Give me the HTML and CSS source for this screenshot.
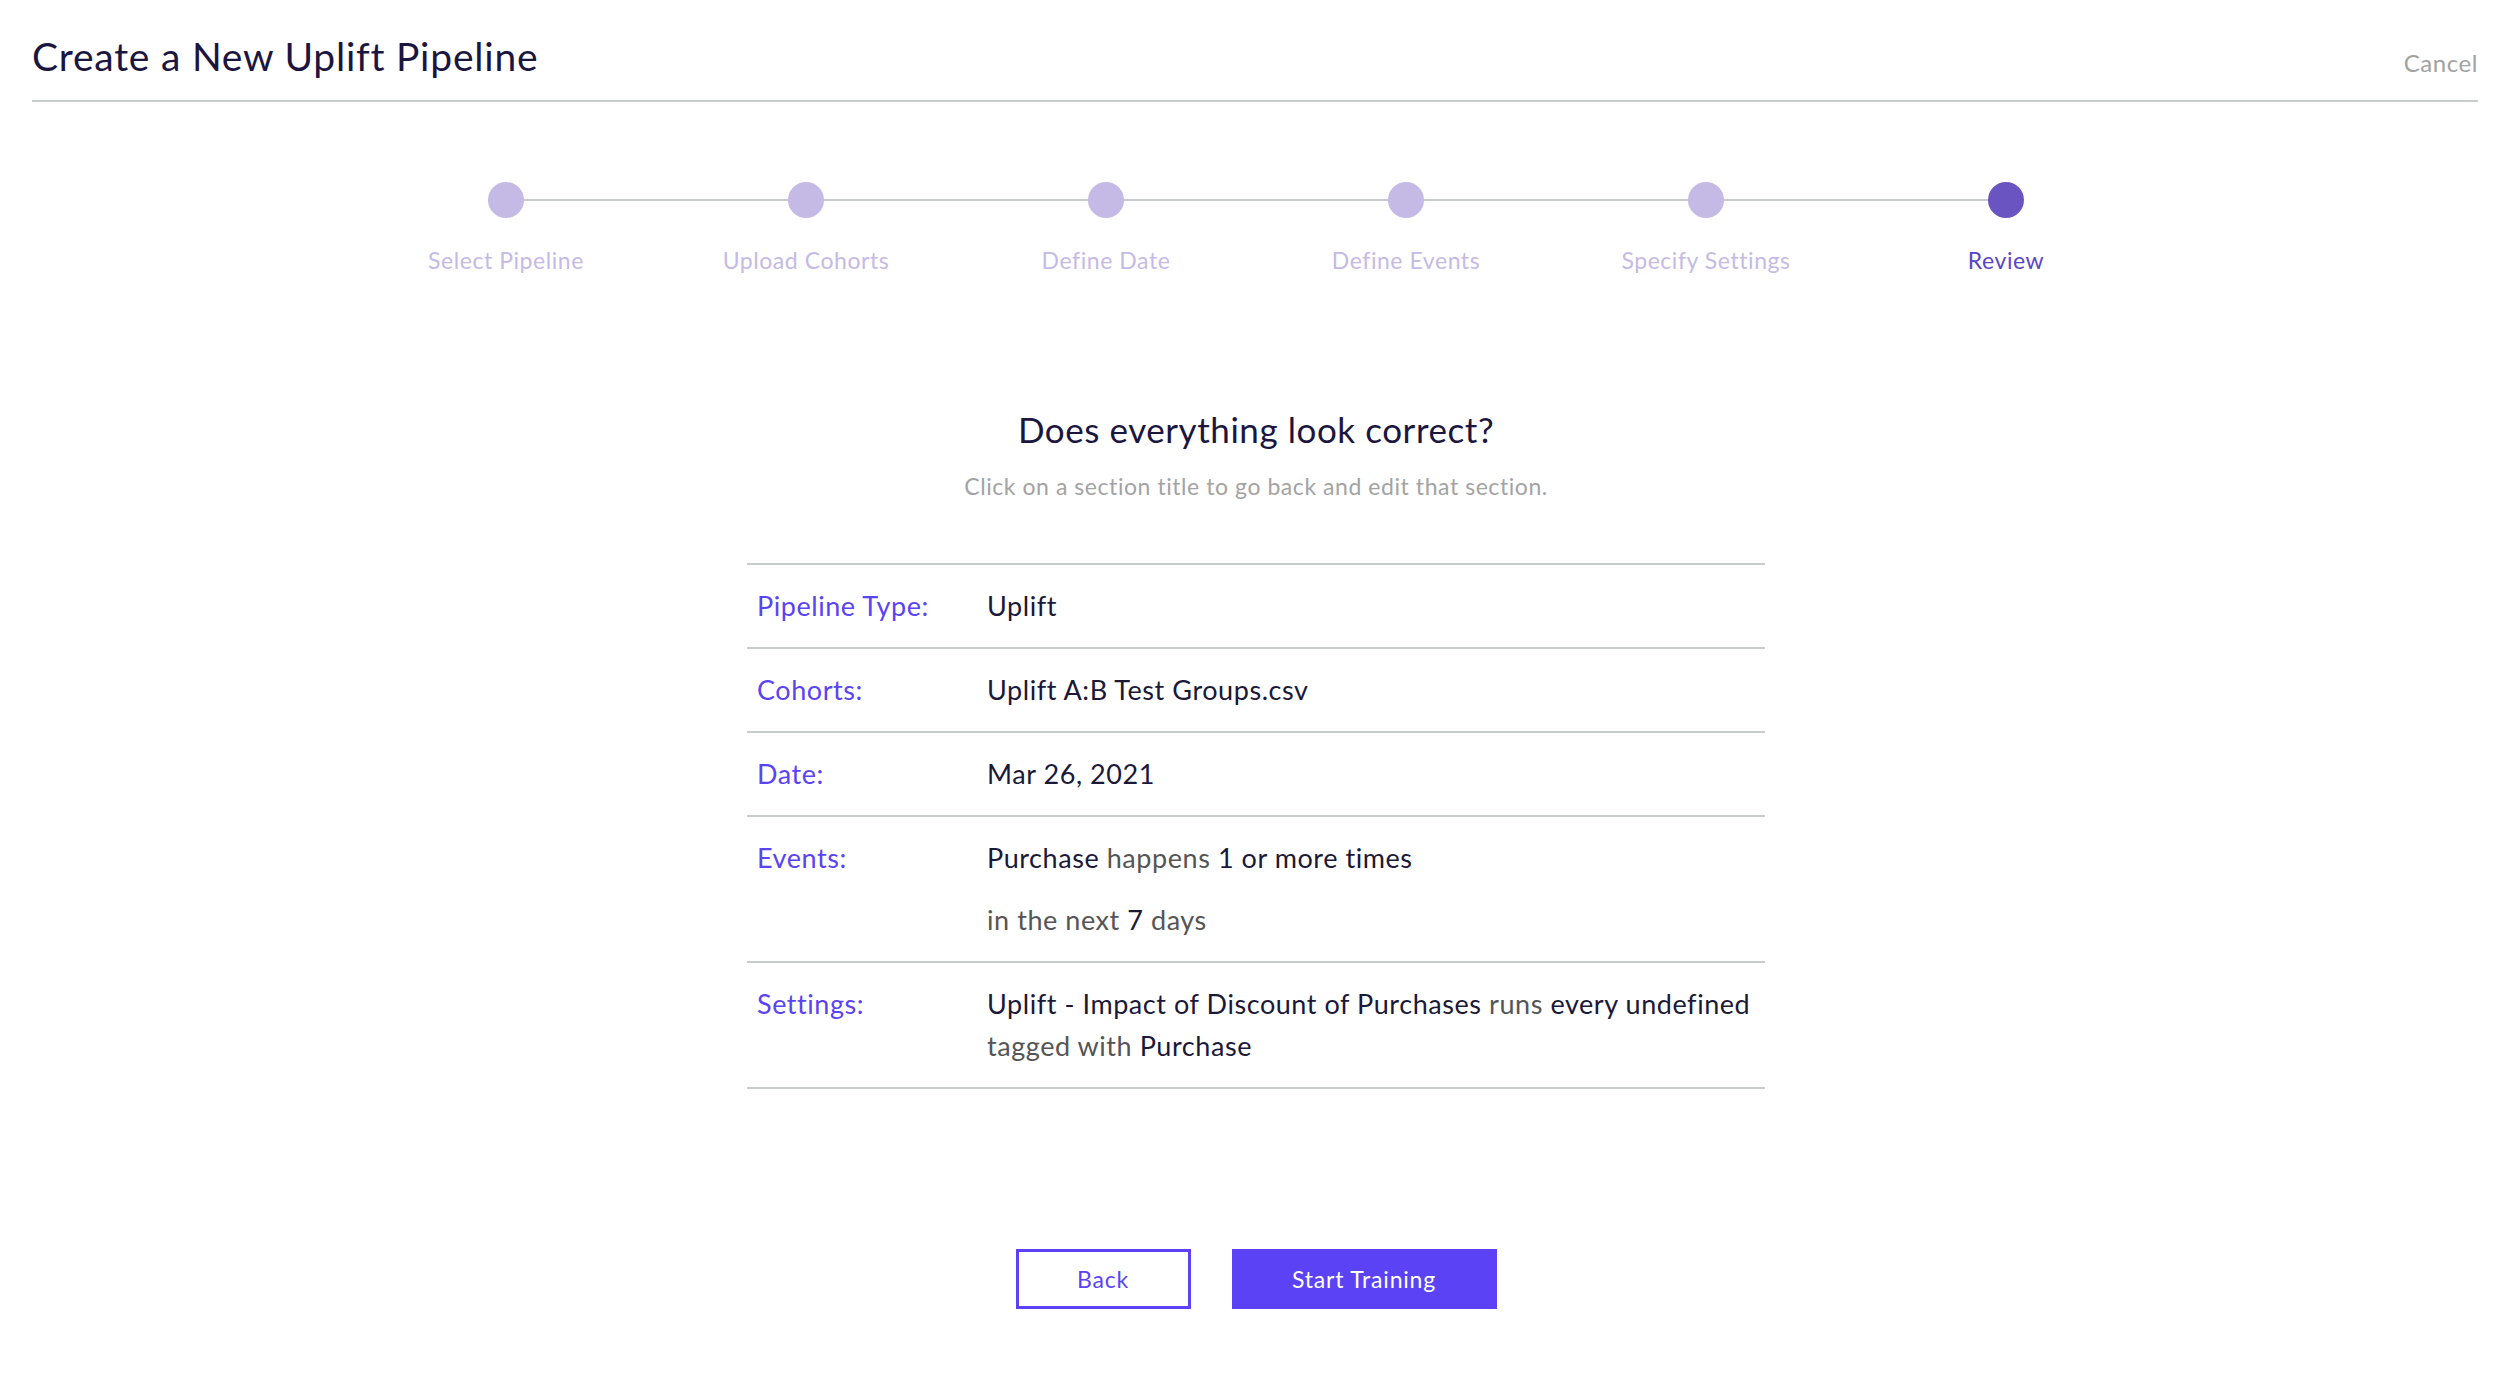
FILE: index.html
```html
<!doctype html>
<html lang="en">
<head>
    <meta charset="utf-8" />
    <title>Create a New Uplift Pipeline</title>
    <link rel="stylesheet" href="styles.css">
</head>
<body>
    <div class="header">
        <h1 class="title">Create a New Uplift Pipeline</h1>
        <a class="cancel" href="#">Cancel</a>
    </div>

    <ol class="steps">
        <li class="step"><span class="dot"></span><span class="step-name">Select Pipeline</span></li>
        <li class="step"><span class="dot"></span><span class="step-name">Upload Cohorts</span></li>
        <li class="step"><span class="dot"></span><span class="step-name">Define Date</span></li>
        <li class="step"><span class="dot"></span><span class="step-name">Define Events</span></li>
        <li class="step"><span class="dot"></span><span class="step-name">Specify Settings</span></li>
        <li class="step current"><span class="dot"></span><span class="step-name">Review</span></li>
    </ol>

    <div class="review">
        <h2 class="review-title">Does everything look correct?</h2>
        <p class="review-hint">Click on a section title to go back and edit that section.</p>

        <div class="summary">
            <div class="row">
                <a class="row-label" href="#">Pipeline Type:</a>
                <div class="row-value"><b>Uplift</b></div>
            </div>
            <div class="row">
                <a class="row-label" href="#">Cohorts:</a>
                <div class="row-value"><b>Uplift A:B Test Groups.csv</b></div>
            </div>
            <div class="row">
                <a class="row-label" href="#">Date:</a>
                <div class="row-value"><b>Mar 26, 2021</b></div>
            </div>
            <div class="row">
                <a class="row-label" href="#">Events:</a>
                <div class="row-value">
                    <p><b>Purchase</b> happens <b>1 or more times</b></p>
                    <p>in the next <b>7</b> days</p>
                </div>
            </div>
            <div class="row">
                <a class="row-label" href="#">Settings:</a>
                <div class="row-value"><b>Uplift - Impact of Discount of Purchases</b> runs <b>every undefined</b> tagged with <b>Purchase</b></div>
            </div>
        </div>
    </div>

    <div class="actions">
        <button class="btn btn-outline">Back</button>
        <button class="btn btn-primary">Start Training</button>
    </div>
</body>
</html>
```

FILE: styles.css
```css
* { padding:0; margin:0; box-sizing:border-box; }

body
{
    font-family: Lato, "Open Sans", sans-serif;
    color: #1b1838;
    background: #fff;
    letter-spacing: 0.035em;
}

.header
{
    display: flex;
    justify-content: space-between;
    align-items: flex-end;
    margin: 0 34px 0 32px;
    height: 102px;
    padding-bottom: 22px;
    border-bottom: 2px solid #c9cccc;
}
.title
{
    font-size: 39px;
    font-weight: 400;
    color: #1b1640;
    line-height: 44px;
    letter-spacing: 0.02em;
}
.cancel
{
    font-size: 24px;
    color: #a2a2a2;
    text-decoration: none;
    line-height: 30px;
}

.steps
{
    list-style: none;
    display: grid;
    grid-template-columns: repeat(6, 300px);
    justify-content: center;
    margin-top: 80px;
    position: relative;
    width: 1800px;
    margin-left: auto;
    margin-right: auto;
}
.steps::before
{
    content: "";
    position: absolute;
    left: 150px;
    right: 150px;
    top: 17px;
    height: 2px;
    background: #c9cccc;
}
.step
{
    display: flex;
    flex-direction: column;
    align-items: center;
    gap: 27px;
    position: relative;
}
.dot
{
    width: 36px;
    height: 36px;
    border-radius: 50%;
    background: #c5bae6;
}
.step-name
{
    font-size: 23px;
    line-height: 30px;
    color: #c5bae6;
}
.step.current .dot { background: #6a54c1; }
.step.current .step-name { color: #5b45c4; }

.review
{
    width: 1018px;
    margin: 0 auto;
    text-align: center;
}
.review-title
{
    margin-top: 132px;
    font-size: 35px;
    font-weight: 400;
    line-height: 44px;
    color: #1b1640;
}
.review-hint
{
    margin-top: 20px;
    font-size: 23px;
    line-height: 30px;
    color: #a3a3a3;
}

.summary
{
    margin-top: 62px;
    text-align: left;
    border-bottom: 2px solid #c9cccc;
}
.row
{
    display: flex;
    border-top: 2px solid #c9cccc;
    padding: 20px 0;
}
.row-label
{
    width: 240px;
    flex: none;
    padding-left: 10px;
    font-size: 27px;
    line-height: 42px;
    color: #5a44f2;
    text-decoration: none;
}
.row-value
{
    flex: 1;
    font-size: 27px;
    line-height: 42px;
    color: #555;
}
.row-value b
{
    font-weight: 400;
    color: #1b1838;
}
.row-value p + p { margin-top: 20px; }

.actions
{
    display: flex;
    justify-content: center;
    gap: 41px;
    margin-top: 160px;
}
.btn
{
    height: 60px;
    font-family: inherit;
    font-size: 23px;
    letter-spacing: 0.035em;
    cursor: pointer;
}
.btn-outline
{
    width: 175px;
    background: #fff;
    color: #5b43f5;
    border: 3px solid #5b43f5;
}
.btn-primary
{
    width: 265px;
    background: #5b43f5;
    color: #fff;
    border: 0;
}
```
